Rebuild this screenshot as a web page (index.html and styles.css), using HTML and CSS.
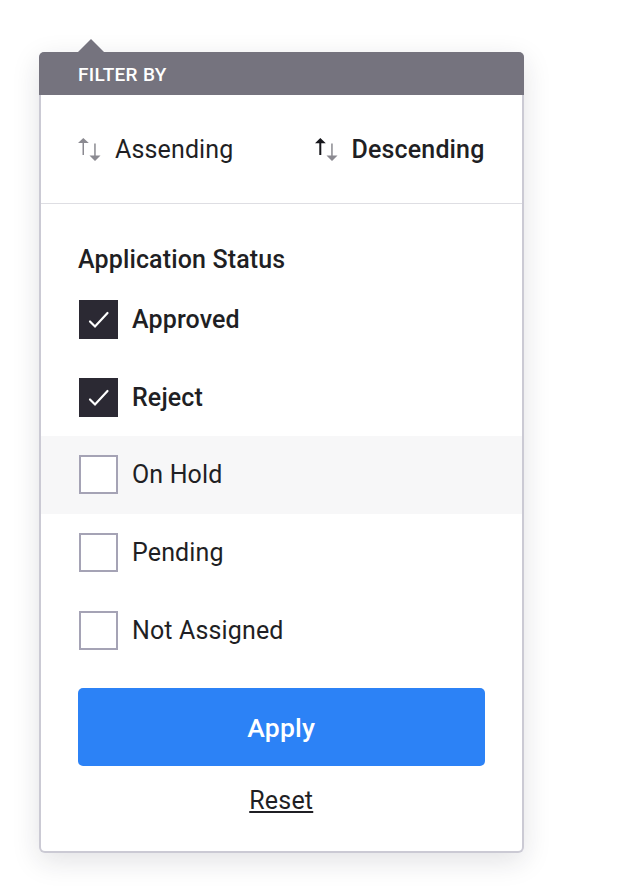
FILE: index.html
```html
<!DOCTYPE html>
<html lang="en">
<head>
<meta charset="utf-8">
<title>Filter</title>
<link rel="stylesheet" href="styles.css">
</head>
<body>
<section class="panel">
  <header class="panel-header">FILTER BY</header>
  <div class="sort">
    <button class="sort-option"><svg class="sort-icon" viewBox="0 0 24 24"><path d="M5.300 1L10.800 6H6V18H4.500V6H0Z"/><path d="M16.200 6.500h1.500V18.500H22.500L17 24L11.500 18.500H16.200Z"/></svg><span>Assending</span></button>
    <button class="sort-option active"><svg class="sort-icon" viewBox="0 0 24 24"><path class="up" d="M5.300 1L10.800 6.300H6.300V18H4.300V6.300H0Z"/><path d="M16.200 6.500h1.500V18.500H22.500L17 24L11.500 18.500H16.200Z"/></svg><span>Descending</span></button>
  </div>
  <h2 class="title">Application Status</h2>
  <ul class="options">
    <li class="option checked"><span class="box"><svg viewBox="0 0 39 39"><path d="M11 21.500l5 5L28.500 13"/></svg></span><span class="label">Approved</span></li>
    <li class="option checked"><span class="box"><svg viewBox="0 0 39 39"><path d="M11 21.500l5 5L28.500 13"/></svg></span><span class="label">Reject</span></li>
    <li class="option hover"><span class="box"></span><span class="label">On Hold</span></li>
    <li class="option"><span class="box"></span><span class="label">Pending</span></li>
    <li class="option"><span class="box"></span><span class="label">Not Assigned</span></li>
  </ul>
  <footer class="actions">
    <button class="apply">Apply</button>
    <a class="reset">Reset</a>
  </footer>
</section>
</body>
</html>
```

FILE: styles.css
```css
* { box-sizing: border-box; }
body { margin: 0; min-height: 892px; padding: 52px 0 0 39px; background: #fff; font-family: Roboto, sans-serif; font-size: 25px; letter-spacing: .14px; color: #1f1f24; }
button { border: 0; padding: 0; background: none; font: inherit; letter-spacing: inherit; color: inherit; }
.panel { position: relative; width: 484.500px; height: 801px; border: 2px solid #cbcad4; border-top: 0; border-radius: 6px; background: #fff; box-shadow: 0 8px 28px rgba(30, 30, 50, .13); }
.panel-header { height: 43px; margin: 0 -2px; padding-left: 39px; border-radius: 5px 5px 0 0; background: #75737e; color: #fff; font-size: 19px; font-weight: 500; line-height: 45px; letter-spacing: .3px; }
.panel-header::before { content: ""; position: absolute; left: 36px; top: -13px; border: 14px solid transparent; border-top: 0; border-bottom: 14px solid #75737e; }
.sort { height: 109px; padding: 0 37px; border-bottom: 1px solid #dedee3; display: flex; align-items: center; justify-content: space-between; }
.sort-option { display: flex; align-items: center; gap: 13px; }
.sort-option.active { font-weight: 500; }
.sort-icon { width: 24px; height: 24px; fill: #8b8a91; }
.sort-icon .up { fill: #17171c; }
.title { margin: 0; padding: 37px 37px 0; height: 77px; font-size: 25px; line-height: 38px; font-weight: 500; }
.options { margin: 0; padding: 0; list-style: none; }
.option { height: 77.600px; padding-left: 38px; display: flex; align-items: center; gap: 14px; }
.option.hover { background: #f7f7f8; }
.checked { font-weight: 500; }
.box { width: 39px; height: 39px; border: 2px solid #a5a3b5; background: #fff; }
.checked .box { border: 0; background: #2b2933; }
.box svg { display: block; width: 39px; height: 39px; fill: none; stroke: #fff; stroke-width: 2.200; stroke-linecap: round; }
.actions { padding: 19px 37px 0; display: flex; flex-direction: column; align-items: center; }
.apply { width: 407px; height: 78px; border-radius: 5px; background: #2c82f6; color: #fff; font-weight: 500; font-size: 26.500px; letter-spacing: .2px; padding-top: 1px; }
.reset { margin-top: 20px; line-height: 30px; letter-spacing: .2px; text-decoration: underline; }
```
